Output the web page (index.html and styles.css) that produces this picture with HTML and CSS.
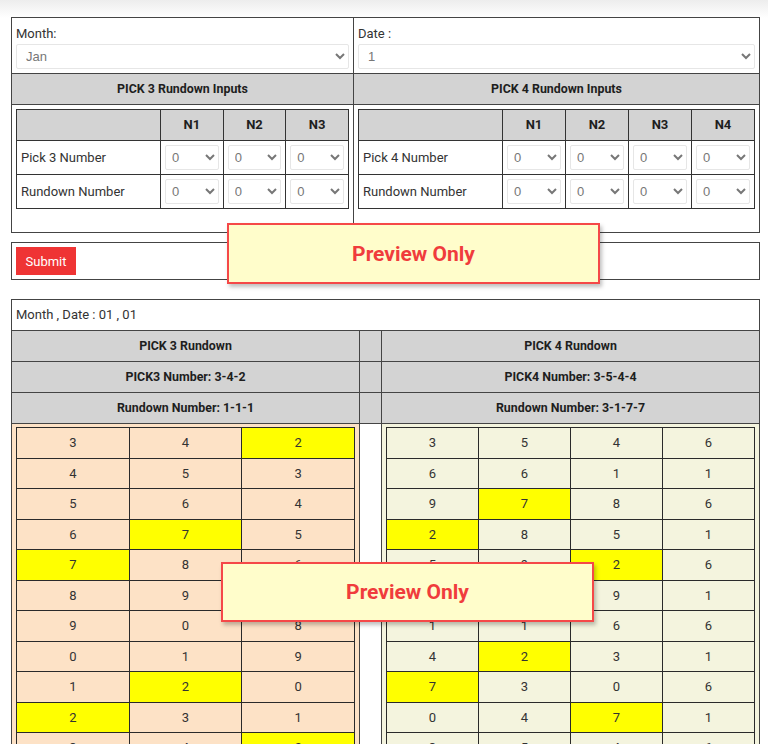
FILE: index.html
```html
<!DOCTYPE html>
<html lang="en">
<head>
  <meta charset="UTF-8">
  <meta name="viewport" content="width=device-width, initial-scale=1.0">
  <title>Pick 3 / Pick 4 Rundown</title>
  <link rel="stylesheet" href="styles.css">
</head>

<body>
  <div class="page">
    <table class="box form-table">
      <colgroup><col class="col-p3-in"><col></colgroup>
      <tr>
        <td class="field">
          <label class="field-label">Month:</label>
          <select class="wide-select"><option>Jan</option></select>
        </td>
        <td class="field">
          <label class="field-label">Date :</label>
          <select class="wide-select"><option>1</option></select>
        </td>
      </tr>
      <tr>
        <th class="head">PICK 3 Rundown Inputs</th>
        <th class="head">PICK 4 Rundown Inputs</th>
      </tr>
      <tr>
        <td class="inputs-cell">
          <table class="input-grid">
            <colgroup><col class="col-label"><col><col><col></colgroup>
            <tr><th></th><th>N1</th><th>N2</th><th>N3</th></tr>
            <tr>
              <td>Pick 3 Number</td>
              <td><select class="num-select"><option>0</option></select></td>
              <td><select class="num-select"><option>0</option></select></td>
              <td><select class="num-select"><option>0</option></select></td>
            </tr>
            <tr>
              <td>Rundown Number</td>
              <td><select class="num-select"><option>0</option></select></td>
              <td><select class="num-select"><option>0</option></select></td>
              <td><select class="num-select"><option>0</option></select></td>
            </tr>
          </table>
        </td>
        <td class="inputs-cell">
          <table class="input-grid">
            <colgroup><col class="col-label"><col><col><col><col></colgroup>
            <tr><th></th><th>N1</th><th>N2</th><th>N3</th><th>N4</th></tr>
            <tr>
              <td>Pick 4 Number</td>
              <td><select class="num-select"><option>0</option></select></td>
              <td><select class="num-select"><option>0</option></select></td>
              <td><select class="num-select"><option>0</option></select></td>
              <td><select class="num-select"><option>0</option></select></td>
            </tr>
            <tr>
              <td>Rundown Number</td>
              <td><select class="num-select"><option>0</option></select></td>
              <td><select class="num-select"><option>0</option></select></td>
              <td><select class="num-select"><option>0</option></select></td>
              <td><select class="num-select"><option>0</option></select></td>
            </tr>
          </table>
        </td>
      </tr>
    </table>

    <table class="box submit-table">
      <tr><td><button class="submit-btn">Submit</button></td></tr>
    </table>

    <table class="box result-table">
      <colgroup><col class="col-p3"><col class="col-gap"><col></colgroup>
      <tr><td class="date-line" colspan="3">Month , Date : 01 , 01</td></tr>
      <tr><th class="head">PICK 3 Rundown</th><th class="head"></th><th class="head">PICK 4 Rundown</th></tr>
      <tr><th class="head">PICK3 Number: 3-4-2</th><th class="head"></th><th class="head">PICK4 Number: 3-5-4-4</th></tr>
      <tr><th class="head">Rundown Number: 1-1-1</th><th class="head"></th><th class="head">Rundown Number: 3-1-7-7</th></tr>
      <tr>
        <td class="grid-cell p3-cell">
          <table class="run-grid">
            <tr><td>3</td><td>4</td><td class="hl">2</td></tr>
            <tr><td>4</td><td>5</td><td>3</td></tr>
            <tr><td>5</td><td>6</td><td>4</td></tr>
            <tr><td>6</td><td class="hl">7</td><td>5</td></tr>
            <tr><td class="hl">7</td><td>8</td><td>6</td></tr>
            <tr><td>8</td><td>9</td><td class="hl">7</td></tr>
            <tr><td>9</td><td>0</td><td>8</td></tr>
            <tr><td>0</td><td>1</td><td>9</td></tr>
            <tr><td>1</td><td class="hl">2</td><td>0</td></tr>
            <tr><td class="hl">2</td><td>3</td><td>1</td></tr>
            <tr><td>3</td><td>4</td><td class="hl">2</td></tr>
            <tr><td>4</td><td>5</td><td>3</td></tr>
          </table>
        </td>
        <td class="gap-cell"></td>
        <td class="grid-cell p4-cell">
          <table class="run-grid">
            <tr><td>3</td><td>5</td><td>4</td><td>6</td></tr>
            <tr><td>6</td><td>6</td><td>1</td><td>1</td></tr>
            <tr><td>9</td><td class="hl">7</td><td>8</td><td>6</td></tr>
            <tr><td class="hl">2</td><td>8</td><td>5</td><td>1</td></tr>
            <tr><td>5</td><td>9</td><td class="hl">2</td><td>6</td></tr>
            <tr><td>8</td><td>0</td><td>9</td><td>1</td></tr>
            <tr><td>1</td><td>1</td><td>6</td><td>6</td></tr>
            <tr><td>4</td><td class="hl">2</td><td>3</td><td>1</td></tr>
            <tr><td class="hl">7</td><td>3</td><td>0</td><td>6</td></tr>
            <tr><td>0</td><td>4</td><td class="hl">7</td><td>1</td></tr>
            <tr><td>3</td><td>5</td><td>4</td><td>6</td></tr>
            <tr><td>6</td><td>6</td><td>1</td><td>1</td></tr>
          </table>
        </td>
      </tr>
    </table>
  </div>

  <div class="preview preview-form">Preview Only</div>
  <div class="preview preview-result">Preview Only</div>
</body>
</html>
```

FILE: styles.css
```css
body {
  margin: 0;
  font-family: Roboto, "Liberation Sans", sans-serif;
  font-size: 13px;
  color: #333;
  background: #fff linear-gradient(#ededed, #fff 18px) no-repeat;
  position: relative;
}

.page {
  padding: 17px 8px 40px 11px;
}

table {
  border-collapse: collapse;
}

.box {
  width: 100%;
  table-layout: fixed;
  border: 1px solid #555;
}

.box > tbody > tr > td,
.box > tbody > tr > th {
  border: 1px solid #444;
  padding: 4px;
  vertical-align: top;
  text-align: left;
}

.col-p3-in {
  width: 342px;
}

.field-label {
  display: block;
  line-height: 20px;
  padding-top: 2px;
}

.wide-select,
.num-select {
  display: block;
  width: 100%;
  height: 25px;
  box-sizing: border-box;
  border: 1px solid #e6e6e6;
  border-radius: 2px;
  background-color: #fff;
  color: #777;
  font-family: "Liberation Sans", Arial, sans-serif;
  font-size: 13px;
}

.wide-select {
  padding: 0 5px;
}

.num-select {
  padding: 0 2px;
}

.box > tbody > tr > th.head {
  background-color: #d3d3d3;
  color: #1e1e1e;
  font-weight: bold;
  font-size: 12.4px;
  text-align: center;
  padding: 5px 4px;
  line-height: 20px;
  vertical-align: middle;
}

.box > tbody > tr > td.inputs-cell {
  padding: 4px 4px 23px;
}

.input-grid {
  width: 100%;
  table-layout: fixed;
  border: 1px solid #333;
}

.col-label {
  width: 144px;
}

.input-grid th,
.input-grid td {
  border: 1px solid #333;
  padding: 4px;
  text-align: left;
  vertical-align: middle;
}

.input-grid th {
  background-color: #d3d3d3;
  color: #1e1e1e;
  font-weight: bold;
  text-align: center;
  padding: 5px 4px;
  line-height: 20px;
}

.submit-table {
  margin-top: 9px;
}

.submit-btn {
  display: block;
  width: 60px;
  height: 28px;
  border: none;
  background-color: #ef3434;
  color: #fff;
  font-family: Roboto, "Liberation Sans", sans-serif;
  font-size: 13px;
  padding: 0;
}

.result-table {
  margin-top: 19px;
}

.col-p3 {
  width: 348px;
}

.col-gap {
  width: 22px;
}

.box > tbody > tr > td.date-line {
  line-height: 22px;
}

.box > tbody > tr > td.grid-cell {
  padding: 3px 4px 4px;
}

.p3-cell {
  background-color: #fde2c6;
}

.p4-cell {
  background-color: #f4f4de;
}

.gap-cell {
  background-color: #fff;
}

.run-grid {
  width: 100%;
  table-layout: fixed;
  border: 1px solid #333;
}

.run-grid td {
  border: 1px solid #2a2a2a;
  text-align: center;
  padding: 5px 4px;
  line-height: 19.5px;
  color: #333;
}

.run-grid td.hl {
  background-color: #ffff00;
}

/* overlay stamps */
.preview {
  position: absolute;
  width: 373px;
  height: 61px;
  box-sizing: border-box;
  background-color: #fffdcb;
  border: 2px solid #f54848;
  box-shadow: 2px 3px 4px rgba(0, 0, 0, 0.25);
  color: #f03c3c;
  font-weight: bold;
  font-size: 21px;
  display: flex;
  align-items: center;
  justify-content: center;
}

.preview-form {
  left: 227px;
  top: 223px;
}

.preview-result {
  left: 221px;
  top: 562px;
  height: 60px;
}
```
